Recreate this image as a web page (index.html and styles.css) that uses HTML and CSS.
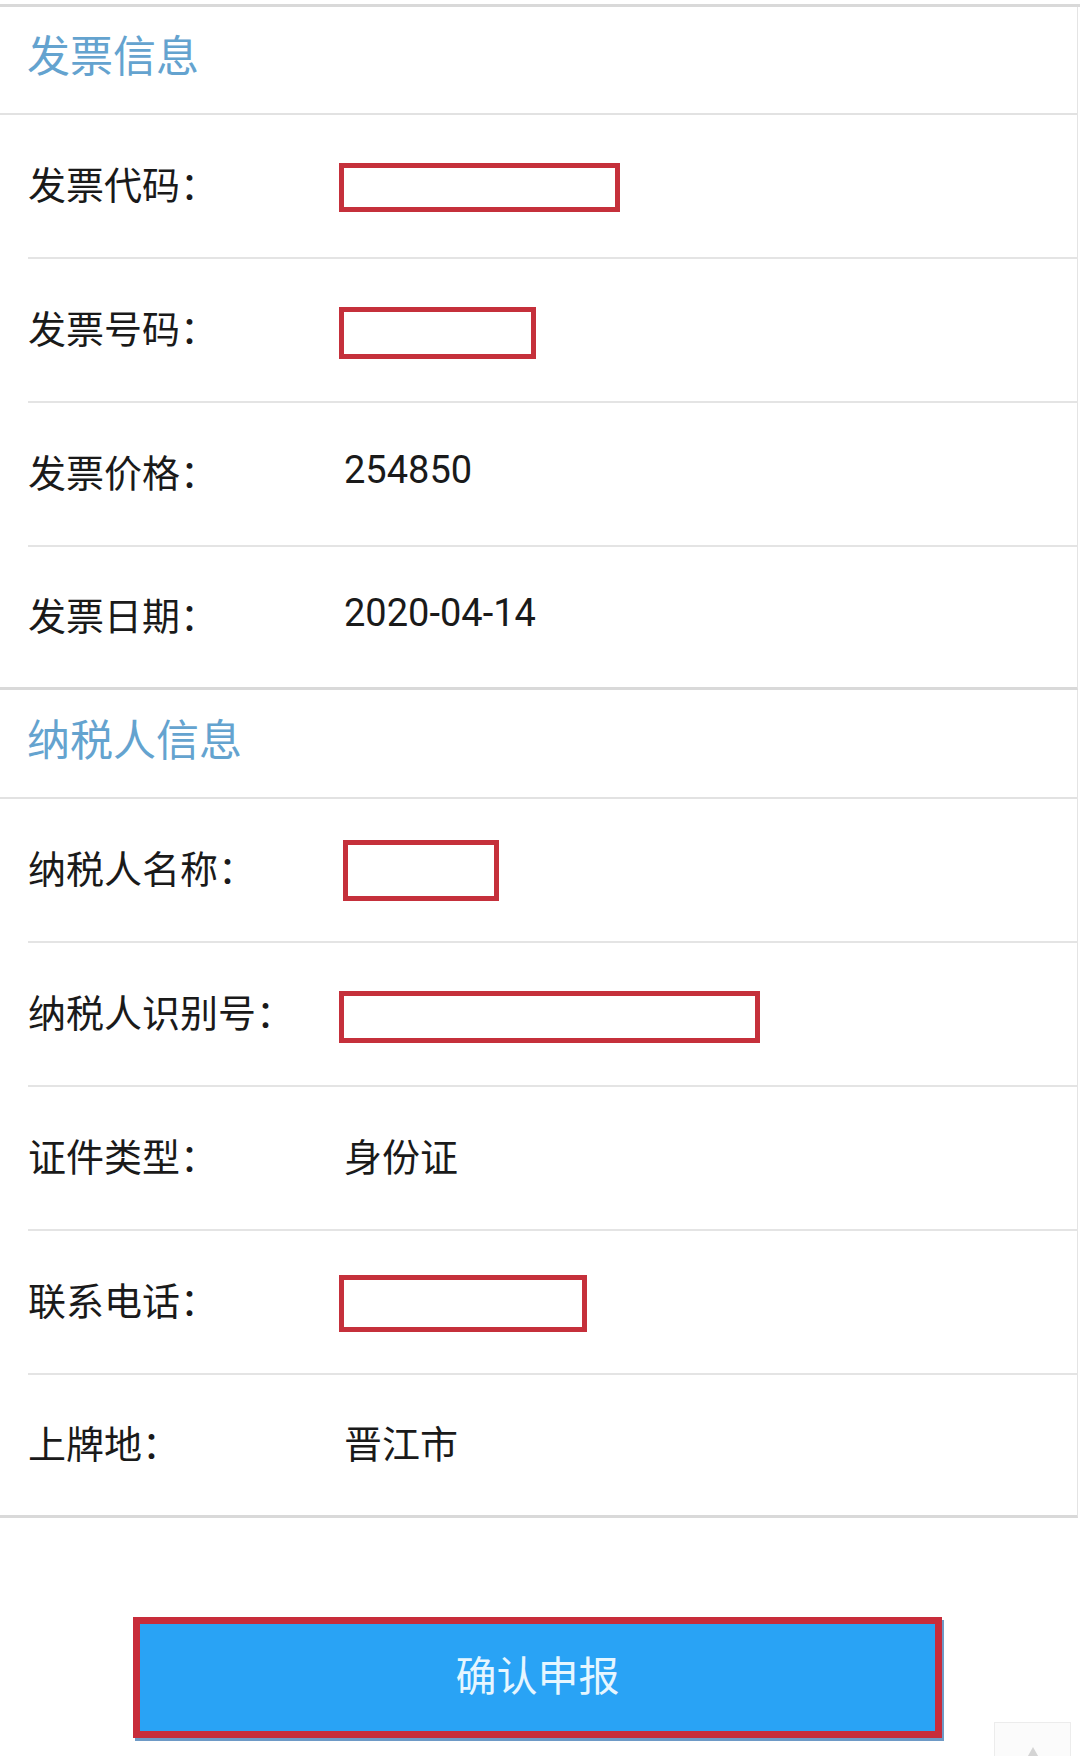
FILE: index.html
```html
<!DOCTYPE html>
<html lang="zh-CN">
<head>
  <meta charset="UTF-8" />
  <meta name="viewport" content="width=device-width, initial-scale=1.0" />
  <title>确认申报</title>
  <link rel="stylesheet" href="styles.css">
</head>
<body>

  <div class="page">
    <!-- 发票信息 -->
    <div class="section">
      <div class="section-title">发票信息</div>
      <div class="row">
        <span class="label">发票代码：</span>
        <span class="mask mask-code"></span>
      </div>
      <div class="row">
        <span class="label">发票号码：</span>
        <span class="mask mask-number"></span>
      </div>
      <div class="row">
        <span class="label">发票价格：</span>
        <span class="value">254850</span>
      </div>
      <div class="row">
        <span class="label">发票日期：</span>
        <span class="value">2020-04-14</span>
      </div>
    </div>

    <!-- 纳税人信息 -->
    <div class="section">
      <div class="section-title">纳税人信息</div>
      <div class="row">
        <span class="label">纳税人名称：</span>
        <span class="mask mask-name"></span>
      </div>
      <div class="row">
        <span class="label">纳税人识别号：</span>
        <span class="mask mask-id"></span>
      </div>
      <div class="row">
        <span class="label">证件类型：</span>
        <span class="value">身份证</span>
      </div>
      <div class="row">
        <span class="label">联系电话：</span>
        <span class="mask mask-phone"></span>
      </div>
      <div class="row">
        <span class="label">上牌地：</span>
        <span class="value">晋江市</span>
      </div>
    </div>

    <div class="actions">
      <button class="submit">确认申报</button>
    </div>
  </div>

  <a class="to-top" href="#"><span class="arrow"></span></a>

</body>
</html>
```

FILE: styles.css
```css
body {
  margin: 0;
  padding: 0;
  background: #fff;
  font-family: Roboto, "Noto Sans CJK SC", sans-serif;
  color: #1a1a1a;
  position: relative;
  height: 1756px;
  overflow: hidden;
}

.page {
  width: 1080px;
  margin-top: 4px;
  border-top: 3px solid #d9d9d9;
}

.section {
  margin-right: 2px;
  border-right: 1px solid #e4e4e4;
  border-bottom: 3px solid #d9d9d9;
}

.section-title {
  height: 106px;
  box-sizing: border-box;
  padding-left: 27px;
  padding-bottom: 14px;
  display: flex;
  align-items: center;
  font-size: 43px;
  color: #64a3cf;
  border-bottom: 2px solid #e2e2e2;
  height: 108px;
}

.section + .section .section-title {
  height: 109px;
}

.row {
  height: 142px;
  margin-left: 28px;
  display: flex;
  align-items: center;
  border-bottom: 2px solid #e4e4e4;
}

.row:last-child {
  height: 140px;
  border-bottom: none;
}

.label {
  width: 311px;
  flex-shrink: 0;
  padding-bottom: 8px;
  font-size: 38px;
  color: #1a1a1a;
}

.value {
  padding-left: 5px;
  padding-bottom: 8px;
  font-size: 38px;
  color: #1a1a1a;
}

.mask {
  display: block;
  box-sizing: border-box;
  border: 5px solid #c5303b;
  background: #fff;
  margin-top: 3px;
}

.mask-code { width: 281px; height: 49px; }
.mask-number { width: 197px; height: 52px; margin-top: 5px; }
.mask-name { width: 156px; height: 61px; margin-left: 4px; margin-top: 0; }
.mask-id { width: 421px; height: 52px; margin-top: 5px; }
.mask-phone { width: 248px; height: 57px; }

.actions {
  padding-top: 99px;
  padding-left: 133px;
}

.submit {
  display: block;
  width: 809px;
  height: 121px;
  box-sizing: border-box;
  border: 7px solid #c82c3a;
  background-color: #29a3f5;
  color: #e6f6ff;
  font-family: "Noto Sans CJK SC", sans-serif;
  font-size: 41px;
  box-shadow: 2px 3px 0 #6e9ac6;
  cursor: pointer;
  padding: 0 0 10px 0;
}

.to-top {
  position: absolute;
  left: 994px;
  top: 1722px;
  width: 77px;
  height: 60px;
  box-sizing: border-box;
  border: 1px solid #ececec;
  background: #fbfbfb;
  display: flex;
  justify-content: center;
}

.arrow {
  margin-top: 24px;
  width: 0;
  height: 0;
  border-left: 9px solid transparent;
  border-right: 9px solid transparent;
  border-bottom: 16px solid #d4d4d4;
}
```
